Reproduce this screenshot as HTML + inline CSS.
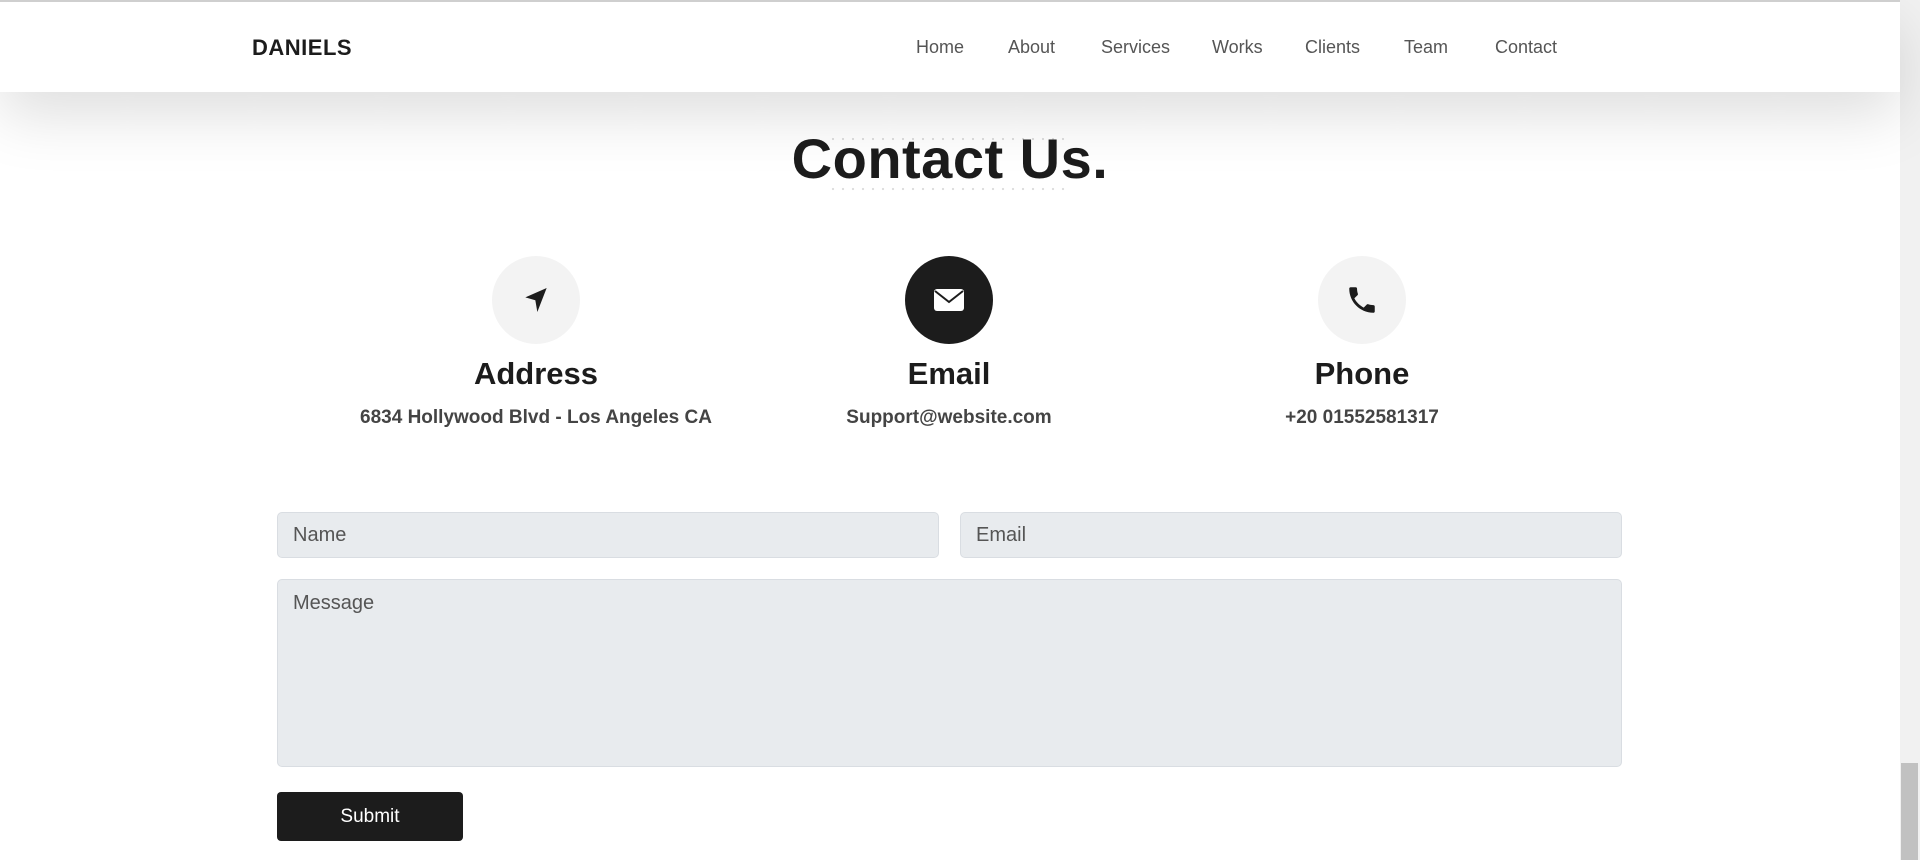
<!DOCTYPE html>
<html><head><style>
*{box-sizing:border-box;margin:0;padding:0}
html,body{width:1920px;height:860px;overflow:hidden;background:#fff;font-family:"Liberation Sans",sans-serif;color:#1c1c1c}
.top{position:absolute;left:0;top:0;width:1900px;height:2px;background:#cfcfcf;z-index:3}
nav{position:absolute;left:0;top:0;width:1900px;height:92px;background:#fff;box-shadow:0 24px 60px rgba(0,0,0,.13);z-index:2}
.logo{position:absolute;left:252px;top:35px;font-size:22px;font-weight:bold;letter-spacing:.5px}
.links a{position:absolute;top:37px;font-size:18px;color:#555;text-decoration:none}
h1{position:absolute;left:0;width:1900px;top:127px;text-align:center;font-size:56px;font-weight:900;letter-spacing:.5px;line-height:64px}
.dots{position:absolute;left:828px;width:242px;height:4px;background-image:radial-gradient(circle,#ddd 1px,transparent 1.3px);background-size:10px 4px}
.circ{position:absolute;top:256px;width:88px;height:88px;border-radius:50%;background:#f3f3f3;display:flex;align-items:center;justify-content:center}
.h{position:absolute;top:356px;width:500px;text-align:center;font-size:31px;font-weight:bold}
.s{position:absolute;top:407px;width:500px;text-align:center;font-size:19px;color:#444;font-weight:bold}
.in{position:absolute;background:#e8ebee;border:1px solid #d9dde2;border-radius:5px;font-size:20px;color:#555;padding:0 15px}
.btn{position:absolute;left:277px;top:792px;width:186px;height:49px;background:#1c1c1c;border-radius:4px;color:#fff;font-size:19px;text-align:center;line-height:49px}
.sb{position:absolute;left:1900px;top:0;width:20px;height:860px;background:#f1f1f1}
.th{position:absolute;left:1901px;top:763px;width:17px;height:97px;background:#c1c1c1}
</style></head><body>
<div class="top"></div>
<nav><div class="logo">DANIELS</div>
<div class="links"><a style="left:916px">Home</a><a style="left:1008px">About</a><a style="left:1101px">Services</a><a style="left:1212px">Works</a><a style="left:1305px">Clients</a><a style="left:1404px">Team</a><a style="left:1495px">Contact</a></div></nav>
<div class="dots" style="top:137px"></div>
<div class="dots" style="top:187px"></div>
<h1>Contact Us.</h1>
<div class="circ" style="left:492px"><svg width="32" height="32" viewBox="0 0 24 24"><path d="M20 3L4 10l7.5 2.2L13 21z" fill="#1c1c1c"/></svg></div>
<div class="circ" style="left:905px;background:#1c1c1c"><svg width="34" height="26" viewBox="0 0 34 26"><rect x="2" y="2" width="30" height="22" rx="3" fill="#fff"/><path d="M3 4l14 11 14-11" stroke="#1c1c1c" stroke-width="2" fill="none"/></svg></div>
<div class="circ" style="left:1318px"><svg width="34" height="34" viewBox="0 0 24 24"><path d="M6.6 10.8c1.4 2.8 3.8 5.1 6.6 6.6l2.2-2.2c.3-.3.7-.4 1-.2 1.1.4 2.3.6 3.6.6.6 0 1 .4 1 1V20c0 .6-.4 1-1 1C10.6 21 3 13.4 3 4c0-.6.4-1 1-1h3.5c.6 0 1 .4 1 1 0 1.3.2 2.5.6 3.6.1.3 0 .7-.2 1z" fill="#1c1c1c"/></svg></div>
<div class="h" style="left:286px">Address</div><div class="h" style="left:699px">Email</div><div class="h" style="left:1112px">Phone</div>
<div class="s" style="left:286px">6834 Hollywood Blvd - Los Angeles CA</div>
<div class="s" style="left:699px">Support@website.com</div>
<div class="s" style="left:1112px">+20 01552581317</div>
<div class="in" style="left:277px;top:512px;width:662px;height:46px;line-height:44px">Name</div>
<div class="in" style="left:960px;top:512px;width:662px;height:46px;line-height:44px">Email</div>
<div class="in" style="left:277px;top:579px;width:1345px;height:188px;padding-top:12px">Message</div>
<div class="btn">Submit</div>
<div class="sb"></div><div class="th"></div>
</body></html>
